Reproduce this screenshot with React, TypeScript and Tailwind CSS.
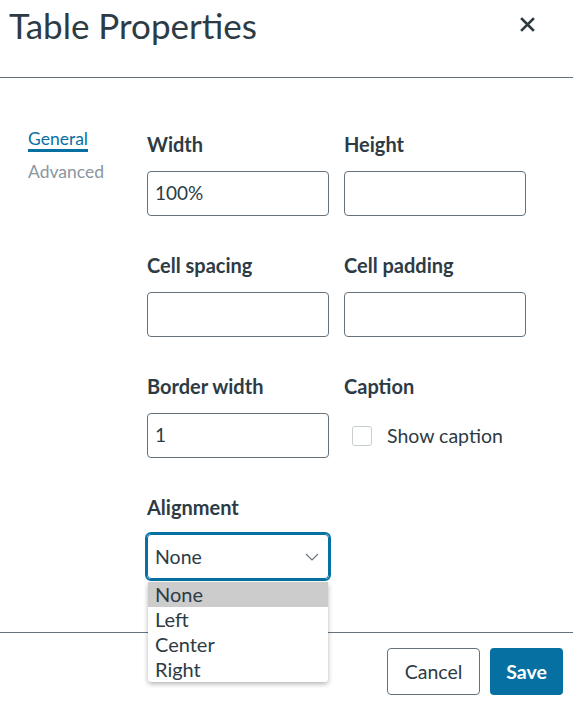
import { useState } from "react";

const FONT = "font-['Lato','Noto_Sans',sans-serif]";
const alignments = ["None", "Left", "Center", "Right"];

function Field({ label, value = "" }: { label: string; value?: string }) {
  return (
    <div className="flex flex-col">
      <span className="text-[20px] leading-[24px] font-bold text-[#2d3b45]">{label}</span>
      <div className="mt-[15px] h-[45px] w-[182px] rounded-[4px] border border-[#66727b] bg-white pl-[7px] flex items-center text-[19px] text-[#2d3b45]">
        {value}
      </div>
    </div>
  );
}

export default function App() {
  const [selected] = useState("None");

  return (
    <div className={`${FONT} w-[573px] h-[707px] bg-white text-[#2d3b45] overflow-hidden`}>
      <header className="h-[78px] border-b border-[#66727b] flex items-start justify-between">
        <h2 className="pl-[9px] pt-[3px] text-[35px] leading-[44px] font-normal">Table Properties</h2>
        <button className="mr-[38px] mt-[16px] w-[16px] h-[16px] flex items-center justify-center" aria-label="Close">
          <svg width="15" height="15" viewBox="0 0 15 15">
            <path d="M2 2 L13 13 M13 2 L2 13" stroke="#2d3b45" strokeWidth="2.6" strokeLinecap="square" />
          </svg>
        </button>
      </header>

      <main className="h-[554px] flex pt-[54px]">
        <nav className="w-[147px] pl-[28px] -mt-[4px] flex flex-col">
          <span className="self-start text-[17.5px] leading-[21px] text-[#0770a3] border-b-[3px] border-[#0770a3]">
            General
          </span>
          <span className="mt-[9px] text-[17.5px] leading-[21px] text-[#8b969e]">Advanced</span>
        </nav>

        <div className="grid grid-cols-[182px_182px] gap-x-[15px] gap-y-[37px] content-start">
          <Field label="Width" value="100%" />
          <Field label="Height" />
          <Field label="Cell spacing" />
          <Field label="Cell padding" />
          <Field label="Border width" value="1" />
          <div className="flex flex-col">
            <span className="text-[20px] leading-[24px] font-bold">Caption</span>
            <label className="mt-[15px] h-[45px] flex items-center pl-[8px] gap-[15px] text-[19.5px]">
              <span className="w-[20px] h-[20px] rounded-[3px] border border-[#c7cdd1] bg-white" />
              Show caption
            </label>
          </div>

          <div className="flex flex-col relative">
            <span className="text-[20px] leading-[24px] font-bold">Alignment</span>
            <div className="mt-[15px] h-[45px] w-[182px] rounded-[4px] border border-[#0770a3] outline-2 outline-solid outline-[#0770a3] bg-white pl-[7px] pr-[9px] flex items-center justify-between text-[19.5px]">
              {selected}
              <svg width="14" height="8" viewBox="0 0 14 8">
                <polyline points="1,1 7,7 13,1" fill="none" stroke="#6b7780" strokeWidth="1.2" />
              </svg>
            </div>
            <ul className="absolute left-[1px] top-[87px] w-[180px] bg-white rounded-b-[3px] shadow-[0_2px_5px_rgba(0,0,0,0.3)] z-10">
              {alignments.map((a) => (
                <li
                  key={a}
                  className={`h-[25px] leading-[25px] pl-[7px] text-[20px] text-[#2d3b45] ${a === selected ? "bg-[#cccccc]" : ""}`}
                >
                  {a}
                </li>
              ))}
            </ul>
          </div>
        </div>
      </main>

      <footer className="border-t border-[#66727b] flex justify-end gap-[10px] pt-[15px] pr-[10px]">
        <button className="w-[93px] h-[47px] rounded-[4px] border border-[#66727b] bg-white text-[19.5px] text-[#2d3b45]">
          Cancel
        </button>
        <button className="w-[73px] h-[47px] rounded-[4px] bg-[#0770a3] text-[19.5px] font-bold text-white">
          Save
        </button>
      </footer>
    </div>
  );
}
